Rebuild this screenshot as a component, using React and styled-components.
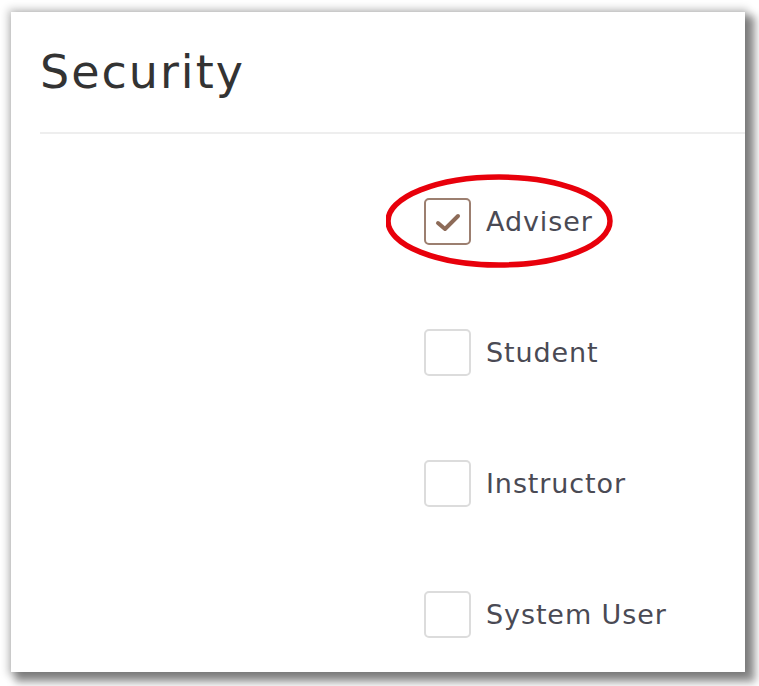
import React from "react"
import styled, { createGlobalStyle } from "styled-components"

const GlobalStyle = createGlobalStyle`
  html, body {
    margin: 0;
    padding: 0;
    background: #ffffff;
  }
  body {
    font-family: "DejaVu Sans", Verdana, sans-serif;
  }
`

const Stage = styled.div`
  width: 759px;
  height: 686px;
  padding: 12px 0 0 11px;
  box-sizing: border-box;
`

const Frame = styled.div`
  width: 734px;
  height: 660px;
  background: #ffffff;
  box-shadow: 7px 7px 8px 3px rgba(0, 0, 0, 0.42), 0 0 8px 3px rgba(0, 0, 0, 0.22);
  padding-left: 29px;
  box-sizing: border-box;
  overflow: hidden;
`

const Title = styled.h1`
  margin: 0;
  padding-top: 34px;
  height: 86px;
  box-sizing: border-box;
  font-size: 46px;
  font-weight: normal;
  line-height: 52px;
  color: #333333;
  letter-spacing: 2px;
`

const Divider = styled.div`
  height: 2px;
  background: #eeeeee;
  margin-top: 34px;
`

const Options = styled.div`
  display: flex;
  flex-direction: column;
  gap: 84px;
  padding: 64px 0 0 384px;
`

const Row = styled.label`
  position: relative;
  display: flex;
  align-items: center;
  gap: 15px;
  height: 47px;
`

const Box = styled.span`
  width: 47px;
  height: 47px;
  box-sizing: border-box;
  border: 2px solid ${({ $checked }) => ($checked ? "#9c7f70" : "#dcdcdc")};
  border-radius: 5px;
  display: flex;
  align-items: center;
  justify-content: center;
`

const Label = styled.span`
  font-size: 27px;
  color: #4a4a54;
  letter-spacing: 0.9px;
`

const Highlight = styled.svg`
  position: absolute;
  left: -38px;
  top: -24px;
  pointer-events: none;
`

const roles = [
  { name: "Adviser", checked: true },
  { name: "Student" },
  { name: "Instructor" },
  { name: "System User" },
]

const Check = () => (
  <svg width="26" height="22" viewBox="0 0 26 22">
    <path
      d="M3 12 L10 18 L23 5"
      fill="none"
      stroke="#8d6b58"
      strokeWidth="4"
      strokeLinecap="round"
      strokeLinejoin="round"
    />
  </svg>
)

const App = () => {
  return (
    <Stage>
      <GlobalStyle />
      <Frame>
        <Title>Security</Title>
        <Divider />
        <Options>
          {roles.map((role) => (
            <Row key={role.name}>
              {role.checked && (
                <Highlight width="232" height="98" viewBox="0 0 232 98">
                  <ellipse
                    cx="113"
                    cy="47"
                    rx="111"
                    ry="44"
                    fill="none"
                    stroke="#e8000b"
                    strokeWidth="5.5"
                  />
                </Highlight>
              )}
              <Box $checked={role.checked}>{role.checked && <Check />}</Box>
              <Label>{role.name}</Label>
            </Row>
          ))}
        </Options>
      </Frame>
    </Stage>
  )
}

export default App
